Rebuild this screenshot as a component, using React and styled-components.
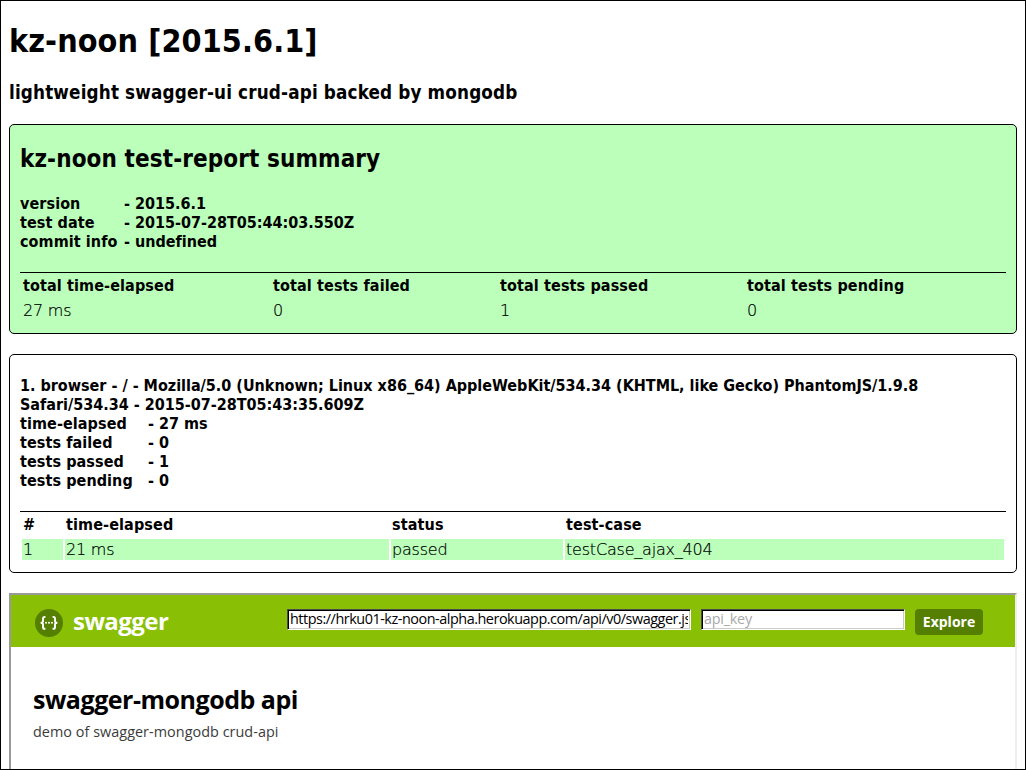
import React from "react";
import styled, { createGlobalStyle } from "styled-components";

const GlobalStyle = createGlobalStyle`
  * { box-sizing: border-box; }
  body { margin: 0; background: #fff; overflow: hidden; }
  h1, h2, h3, h4, p { margin: 0; }
`;

const Page = styled.main`
  height: 770px;
  overflow: hidden;
  border: 1px solid #000;
  padding: 21px 8px 0;
  color: #000;
  font: 16px/19px "DejaVu Sans Condensed", "DejaVu Sans", sans-serif;
`;

const Title = styled.h1`
  font-size: 32px;
  line-height: 38px;
  letter-spacing: 0.1px;
`;

const Subtitle = styled.h3`
  margin: 21px 0 20px;
  font-size: 18.72px;
  line-height: 23px;
  letter-spacing: 0.155px;
`;

const Card = styled.section`
  height: ${(p) => p.$height}px;
  margin-bottom: 20px;
  padding: ${(p) => p.$top}px 10px 0;
  border: 1px solid #000;
  border-radius: 5px;
  background: ${(p) => (p.$passed ? "#bfb" : "#fff")};
`;

const CardTitle = styled.h2`
  font-size: 24px;
  line-height: 28px;
  margin-bottom: 21px;
  letter-spacing: 0.1px;
`;

const Info = styled.h4`
  font-size: 16px;
  line-height: 19px;
  margin-bottom: 21px;
  letter-spacing: -0.01px;
`;

const InfoRow = styled.div`
  display: grid;
  grid-template-columns: ${(p) => p.$label}px 1fr;
`;

const InfoLabel = styled.span`
  letter-spacing: 0.08px;
`;

const Report = styled.table`
  width: 986px;
  table-layout: fixed;
  border-collapse: separate;
  border-spacing: 2px;
  border-top: 1px solid #000;
`;

const Head = styled.th`
  width: ${(p) => p.$width}px;
  height: 23px;
  padding: 0 1px 2px;
  text-align: left;
  font-weight: 700;
  letter-spacing: 0.12px;
`;

const Cell = styled.td`
  height: 21px;
  padding: 0 1px;
  background: #bfb;
  font-family: "DejaVu Sans Light", "DejaVu Sans", sans-serif;
  font-weight: 200;
  letter-spacing: -0.2px;
  -webkit-text-stroke: 0.2px #000;
`;

const Frame = styled.section`
  height: 400px;
  border: 2px solid;
  border-color: #9a9a9a #eee #eee #9a9a9a;
`;

const Header = styled.header`
  display: flex;
  align-items: flex-start;
  height: 52px;
  padding: 14px 32px 0 24px;
  background: #89bf04;
`;

const Brand = styled.div`
  display: flex;
  align-items: center;
  gap: 10px;
  width: 252px;
  height: 28px;
  color: #fff;
  svg { display: block; flex: none; }
`;

const BrandName = styled.span`
  padding-bottom: 4px;
  font: 700 24px/24px "Open Sans", sans-serif;
  letter-spacing: -0.55px;
`;

const Field = styled.input`
  width: ${(p) => p.$width}px;
  height: 21px;
  margin-right: 10px;
  padding: 0 2px 2px 2px;
  border: 1px solid;
  border-color: #4c4c4c #fff #fff #4c4c4c;
  box-shadow: inset 1px 1px #000, inset -1px -1px #ccc;
  border-radius: 0;
  outline: 0;
  background: #fff;
  color: #000;
  font: 14.4px/17px "Open Sans", sans-serif;
  letter-spacing: -0.46px;
  &::placeholder { color: #a9a9a9; opacity: 1; letter-spacing: -0.25px; }
`;

const Explore = styled.button`
  width: 68px;
  height: 26px;
  padding: 0;
  border: 0;
  border-radius: 4px;
  background: #547f00;
  color: #fff;
  font: 700 14px/26px "Open Sans", sans-serif;
`;

const ApiInfo = styled.div`
  padding: 36px 22px;
`;

const ApiTitle = styled.h2`
  font: 700 25px/32px "Open Sans", sans-serif;
  letter-spacing: -0.48px;
  white-space: nowrap;
`;

const ApiText = styled.p`
  margin-top: 7px;
  color: #3b3b3b;
  font: 14.4px/20px "Open Sans", sans-serif;
  letter-spacing: 0.04px;
`;

const Logo = () => (
  <svg width="28" height="28" viewBox="0 0 28 28" fill="none">
    <circle cx="14" cy="14" r="14" fill="#547f00" />
    <path
      d="M10.4 8H9.6Q8 8 8 9.6V12Q8 13.8 5.6 13.8Q8 13.8 8 15.6V18.2Q8 19.8 9.6 19.8H10.4M17.6 8H18.4Q20 8 20 9.6V12Q20 13.8 22.4 13.8Q20 13.8 20 15.6V18.2Q20 19.8 18.4 19.8H17.6"
      stroke="#fff"
      strokeWidth="1.9"
    />
    <g fill="#fff">
      <circle cx="11" cy="13.7" r="1" />
      <circle cx="14" cy="13.7" r="1" />
      <circle cx="17" cy="13.7" r="1" />
    </g>
  </svg>
);

const InfoList = ({ rows, label }) =>
  rows.map(([name, value]) => (
    <InfoRow key={name} $label={label}>
      <InfoLabel>{name}</InfoLabel>
      <span>- {value}</span>
    </InfoRow>
  ));

const Table = ({ columns, values }) => (
  <Report>
    <thead>
      <tr>
        {columns.map(([name, width]) => (
          <Head key={name} $width={width}>{name}</Head>
        ))}
      </tr>
    </thead>
    <tbody>
      <tr>
        {values.map((value, i) => (
          <Cell key={i}>{value}</Cell>
        ))}
      </tr>
    </tbody>
  </Report>
);

export default function App() {
  return (
    <Page>
      <GlobalStyle />
      <Title>kz-noon [2015.6.1]</Title>
      <Subtitle>lightweight swagger-ui crud-api backed by mongodb</Subtitle>
      <Card $height={210} $top={20} $passed>
        <CardTitle>kz-noon test-report summary</CardTitle>
        <Info>
          <InfoList
            label={104}
            rows={[
              ["version", "2015.6.1"],
              ["test date", "2015-07-28T05:44:03.550Z"],
              ["commit info", "undefined"],
            ]}
          />
        </Info>
        <Table
          columns={[
            ["total time-elapsed", 248],
            ["total tests failed", 225],
            ["total tests passed", 245],
            ["total tests pending", 258],
          ]}
          values={["27 ms", "0", "1", "0"]}
        />
      </Card>
      <Card $height={219} $top={21}>
        <Info>
          1. browser - / - Mozilla/5.0 (Unknown; Linux x86_64) AppleWebKit/534.34 (KHTML, like Gecko) PhantomJS/1.9.8
          Safari/534.34 - 2015-07-28T05:43:35.609Z
          <InfoList
            label={128}
            rows={[
              ["time-elapsed", "27 ms"],
              ["tests failed", "0"],
              ["tests passed", "1"],
              ["tests pending", "0"],
            ]}
          />
        </Info>
        <Table
          columns={[["#", 41], ["time-elapsed", 324], ["status", 172], ["test-case", 439]]}
          values={["1", "21 ms", "passed", "testCase_ajax_404"]}
        />
      </Card>
      <Frame>
        <Header>
          <Brand>
            <Logo />
            <BrandName>swagger</BrandName>
          </Brand>
          <Field $width={404} defaultValue="https://hrku01-kz-noon-alpha.herokuapp.com/api/v0/swagger.json" />
          <Field $width={204} placeholder="api_key" />
          <Explore>Explore</Explore>
        </Header>
        <ApiInfo>
          <ApiTitle>swagger-mongodb api</ApiTitle>
          <ApiText>demo of swagger-mongodb crud-api</ApiText>
        </ApiInfo>
      </Frame>
    </Page>
  );
}
